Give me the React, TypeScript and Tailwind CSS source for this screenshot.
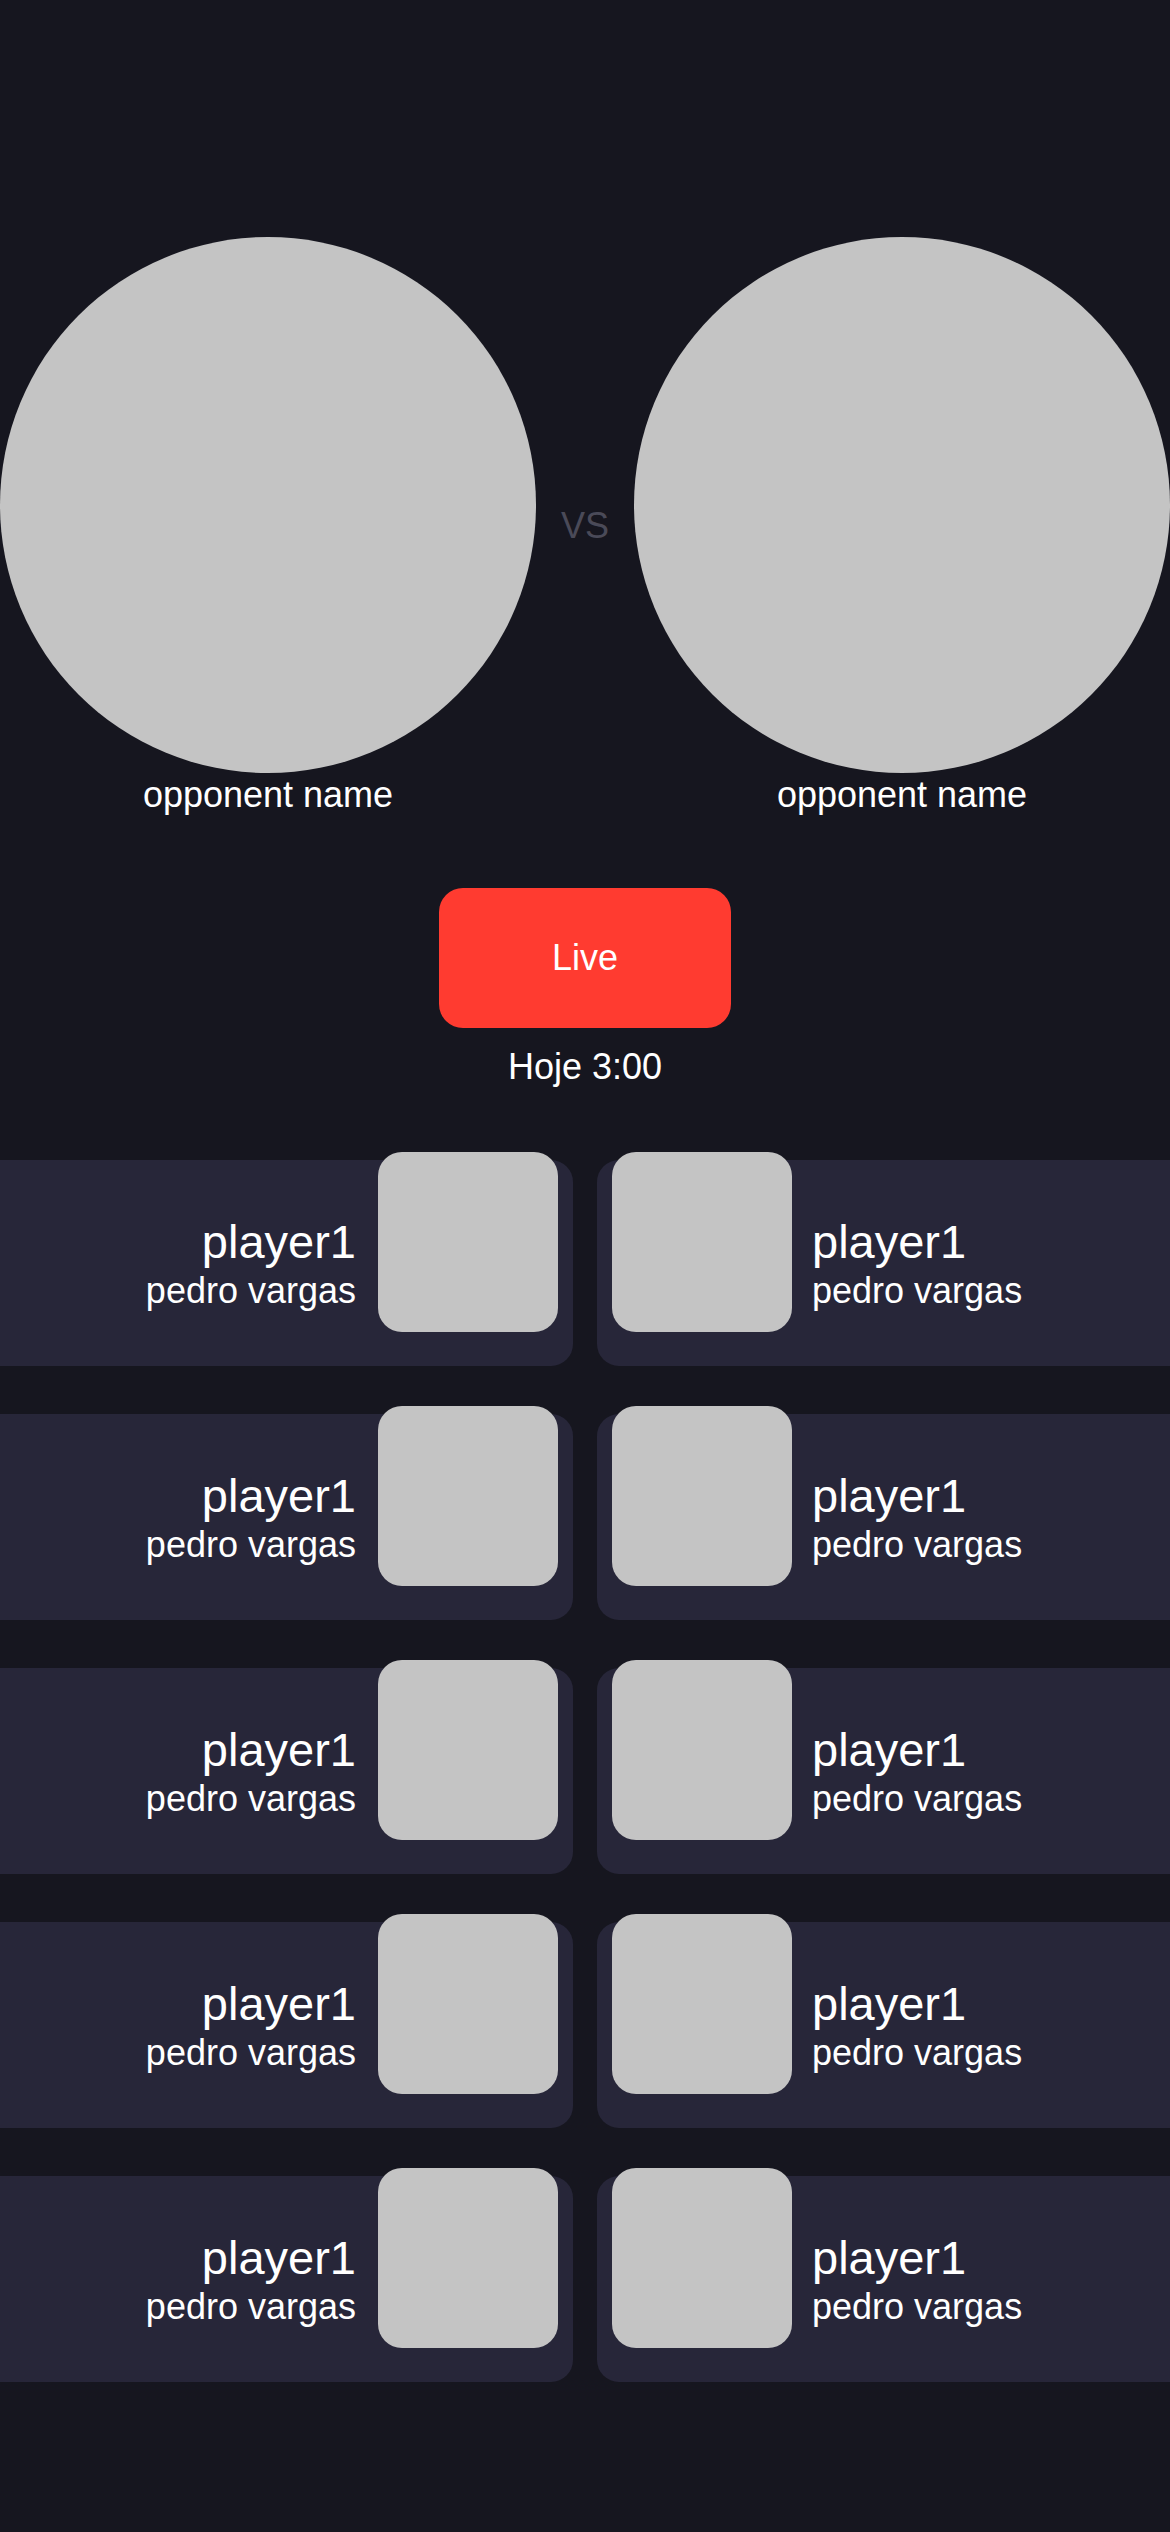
import React from 'react';

const font = "font-['Liberation_Sans','Helvetica',Arial,sans-serif]";

const Opponent: React.FC<{ name: string }> = ({ name }) => (
  <div className="flex w-[536px] flex-col items-center">
    <div className="size-[536px] rounded-full bg-[#c4c4c4]" />
    <p className="mt-[4px] text-[36px] leading-none text-white">{name}</p>
  </div>
);

const PlayerCard: React.FC<{ side: 'left' | 'right'; nick: string; name: string }> = ({ side, nick, name }) => {
  const left = side === 'left';
  return (
    <div
      className={
        left
          ? 'flex h-[206px] justify-end gap-[22px] rounded-r-[22px] bg-[#272639] pr-[15px]'
          : 'flex h-[206px] flex-row-reverse justify-end gap-[20px] rounded-l-[22px] bg-[#272639] pl-[15px]'
      }
    >
      <div className={left ? 'flex flex-col items-end self-center' : 'flex flex-col items-start self-center'}>
        <span className="text-[47px] leading-none text-white">{nick}</span>
        <span className="mt-[8px] text-[36px] leading-none text-white">{name}</span>
      </div>
      <div className="-mt-2 size-[180px] shrink-0 self-start rounded-[24px] bg-[#c4c4c4]" />
    </div>
  );
};

export default function App() {
  const rows = [0, 1, 2, 3, 4];
  return (
    <div className={`min-h-screen bg-[#16161f] pt-[237px] ${font}`}>
      <div className="flex items-center justify-between">
        <Opponent name="opponent name" />
        <span className="mt-[2px] text-[36px] leading-none text-[#4a4a58]">VS</span>
        <Opponent name="opponent name" />
      </div>

      <div className="mx-auto mt-[75px] flex h-[140px] w-[292px] items-center justify-center rounded-[24px] bg-[#ff3b30]">
        <span className="text-[36px] leading-none text-white">Live</span>
      </div>
      <p className="mt-[21px] text-center text-[36px] leading-none text-white">Hoje 3:00</p>

      <div className="mt-[75px] grid grid-cols-2 gap-x-6 gap-y-12">
        {rows.map((r) => (
          <React.Fragment key={r}>
            <PlayerCard side="left" nick="player1" name="pedro vargas" />
            <PlayerCard side="right" nick="player1" name="pedro vargas" />
          </React.Fragment>
        ))}
      </div>
    </div>
  );
}
